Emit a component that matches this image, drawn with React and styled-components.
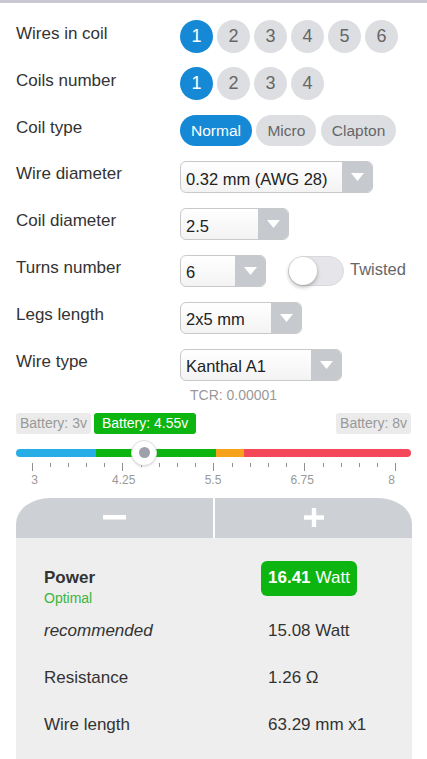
import React from 'react';
import styled, { createGlobalStyle } from 'styled-components';

const GlobalStyle = createGlobalStyle`
  html, body {
    margin: 0;
    padding: 0;
    background: #fff;
  }
  body {
    font-family: "Liberation Sans", Arial, sans-serif;
    color: #333;
  }
`;

const Page = styled.div`
  width: 427px;
  min-height: 759px;
  border-top: 3px solid #c7c8d0;
  box-sizing: border-box;
  overflow: hidden;
`;

const Form = styled.div`
  padding: 10.6px 15px 0 16px;
`;

const Row = styled.div`
  display: flex;
  align-items: center;
  height: 46.8px;
`;

const Label = styled.div`
  width: 164px;
  flex-shrink: 0;
  font-size: 17px;
  line-height: 20px;
  margin-bottom: 6px;
  color: #333;
`;

const Choices = styled.div`
  display: flex;
  gap: ${p => p.$gap}px;
`;

const Circle = styled.div`
  width: 33px;
  height: 33px;
  border-radius: 50%;
  display: flex;
  align-items: center;
  justify-content: center;
  font-size: 18px;
  background: ${p => (p.$active ? '#1589d6' : '#dddee2')};
  color: ${p => (p.$active ? '#fff' : '#666')};
`;

const Pill = styled.div`
  height: 31px;
  padding: 0 11px;
  border-radius: 16px;
  display: flex;
  align-items: center;
  font-size: 15.5px;
  background: ${p => (p.$active ? '#1589d6' : '#dddee2')};
  color: ${p => (p.$active ? '#fff' : '#666')};
`;

const SelectBox = styled.div`
  width: ${p => p.$w}px;
  height: 32px;
  box-sizing: border-box;
  display: flex;
  border: 1px solid #c9c9c9;
  border-radius: 6px;
  overflow: hidden;
  background: linear-gradient(#fff, #f3f3f3);
`;

const SelectValue = styled.div`
  flex: 1;
  display: flex;
  align-items: center;
  padding: 4px 0 0 5px;
  font-size: 16.5px;
  color: #222;
  white-space: nowrap;
`;

const SelectArrow = styled.div`
  width: 30px;
  background: #c6c9ce;
  display: flex;
  align-items: center;
  justify-content: center;
`;

const Toggle = styled.div`
  margin-left: 22px;
  width: 56px;
  height: 30px;
  box-sizing: border-box;
  border-radius: 15px;
  background: #e6e6ea;
  border: 1px solid #dadade;
  display: flex;
  align-items: center;
`;

const Knob = styled.div`
  width: 28px;
  height: 28px;
  border-radius: 50%;
  background: #fff;
  box-shadow: 0 2px 4px rgba(0, 0, 0, 0.3);
`;

const ToggleText = styled.div`
  margin-left: 6px;
  margin-bottom: 3px;
  font-size: 16.5px;
  color: #666;
`;

const Tcr = styled.div`
  padding-left: 174px;
  font-size: 14px;
  line-height: 14px;
  color: #999;
`;

const SliderSection = styled.div`
  padding: 0 16px 0 16px;
`;

const BatteryRow = styled.div`
  margin-top: 11px;
  display: flex;
  gap: 3px;
`;

const BatteryTag = styled.div`
  height: 21px;
  line-height: 21px;
  font-size: 14px;
  padding: 0 ${p => (p.$active ? 8 : 4)}px;
  border-radius: 3px;
  background: ${p => (p.$active ? '#0cb50f' : '#ebebeb')};
  color: ${p => (p.$active ? '#fff' : '#999')};
  margin-left: ${p => (p.$end ? 'auto' : '0')};
`;

const Track = styled.div`
  position: relative;
  margin-top: 10px;
  height: 18px;
  display: flex;
  align-items: center;
`;

const Bar = styled.div`
  display: flex;
  width: 100%;
  height: 8px;
  border-radius: 4px;
  overflow: hidden;
`;

const Segment = styled.div`
  flex: ${p => p.$size};
  background: ${p => p.$color};
`;

const Thumb = styled.div`
  position: absolute;
  top: 50%;
  width: 26px;
  height: 26px;
  margin: -13px 0 0 -13px;
  box-sizing: border-box;
  border-radius: 50%;
  background: #fff;
  border: 1px solid #dedede;
  box-shadow: 0 1px 2px rgba(0, 0, 0, 0.12);
  display: flex;
  align-items: center;
  justify-content: center;
`;

const ThumbDot = styled.div`
  width: 11px;
  height: 11px;
  border-radius: 50%;
  background: #9ea1a9;
`;

const Ticks = styled.div`
  margin-top: 1px;
  height: 8px;
  display: flex;
  justify-content: space-between;
  align-items: flex-start;
  padding: 0 14.5px 0 15.5px;
`;

const Tick = styled.div`
  width: 1px;
  height: ${p => (p.$major ? 8 : 4)}px;
  background: #8f8f8f;
`;

const TickLabels = styled.div`
  margin-top: 2px;
  height: 14px;
  display: flex;
  justify-content: space-between;
  padding: 0 19.5px 0 18.5px;
`;

const TickLabel = styled.div`
  width: 0;
  display: flex;
  justify-content: center;
  font-size: 12px;
  line-height: 14px;
  color: #999;
  white-space: nowrap;
`;

const Stepper = styled.div`
  margin: 11px 15px 0 16px;
  height: 40px;
  display: flex;
  gap: 2px;
`;

const StepButton = styled.div`
  flex: 1;
  background: #cdd0d5;
  display: flex;
  align-items: center;
  justify-content: center;
  border-top-left-radius: ${p => (p.$side === 'left' ? '34px 26px' : '0')};
  border-top-right-radius: ${p => (p.$side === 'right' ? '34px 26px' : '0')};
`;

const Panel = styled.div`
  margin: 0 15px 0 16px;
  padding: 23px 0 20px 28px;
  background: #eeeeee;
  min-height: 200px;
`;

const ResultRow = styled.div`
  display: grid;
  grid-template-columns: 217px 1fr;
  align-items: ${p => (p.$top ? 'start' : 'center')};
  height: ${p => (p.$top ? 46.5 : 47)}px;
  font-size: 17px;
  color: #333;
`;

const PowerLabel = styled.div`
  padding-top: 7px;
`;

const PowerTitle = styled.div`
  font-weight: bold;
  line-height: 20px;
`;

const Optimal = styled.div`
  font-size: 14px;
  line-height: 16px;
  margin-top: 2px;
  color: #3cb53c;
`;

const Badge = styled.div`
  justify-self: start;
  height: 35px;
  padding: 0 7px;
  border-radius: 6px;
  background: #0cb50f;
  color: #fff;
  display: flex;
  align-items: center;
  gap: 5px;
  b {
    font-weight: bold;
  }
`;

const Value = styled.div`
  padding-left: 7px;
`;

const Italic = styled.div`
  font-style: italic;
`;

const Arrow = () => (
  <svg width="13" height="8" viewBox="0 0 13 8">
    <polygon points="0,0 13,0 6.5,8" fill="#fff" />
  </svg>
);

const Select = ({ w, value }) => (
  <SelectBox $w={w}>
    <SelectValue>{value}</SelectValue>
    <SelectArrow>
      <Arrow />
    </SelectArrow>
  </SelectBox>
);

const MinusIcon = () => (
  <svg width="23" height="5" viewBox="0 0 23 5">
    <rect x="0" y="0" width="23" height="4.5" fill="#fff" />
  </svg>
);

const PlusIcon = () => (
  <svg width="20" height="19" viewBox="0 0 20 19">
    <rect x="0" y="7.3" width="20" height="4.4" fill="#fff" />
    <rect x="7.8" y="0" width="4.4" height="19" fill="#fff" />
  </svg>
);

const segments = [
  { size: 80, color: '#27aee6' },
  { size: 120, color: '#0cb50f' },
  { size: 28, color: '#f7a21b' },
  { size: 167, color: '#f5475a' },
];

const ticks = Array.from({ length: 21 }, (_, i) => i);
const tickLabels = ['3', '4.25', '5.5', '6.75', '8'];

export default function App() {
  const voltage = 4.55;
  const ratio = (voltage - 3) / 5;
  const thumbLeft = 15.5 + ratio * 364.5;

  return (
    <Page>
      <GlobalStyle />
      <Form>
        <Row>
          <Label>Wires in coil</Label>
          <Choices $gap={4}>
            {[1, 2, 3, 4, 5, 6].map(n => (
              <Circle key={n} $active={n === 1}>{n}</Circle>
            ))}
          </Choices>
        </Row>
        <Row>
          <Label>Coils number</Label>
          <Choices $gap={4}>
            {[1, 2, 3, 4].map(n => (
              <Circle key={n} $active={n === 1}>{n}</Circle>
            ))}
          </Choices>
        </Row>
        <Row>
          <Label>Coil type</Label>
          <Choices $gap={4.5}>
            {['Normal', 'Micro', 'Clapton'].map(t => (
              <Pill key={t} $active={t === 'Normal'}>{t}</Pill>
            ))}
          </Choices>
        </Row>
        <Row>
          <Label>Wire diameter</Label>
          <Select w={193} value="0.32 mm (AWG 28)" />
        </Row>
        <Row>
          <Label>Coil diameter</Label>
          <Select w={109} value="2.5" />
        </Row>
        <Row>
          <Label>Turns number</Label>
          <Select w={86} value="6" />
          <Toggle>
            <Knob />
          </Toggle>
          <ToggleText>Twisted</ToggleText>
        </Row>
        <Row>
          <Label>Legs length</Label>
          <Select w={122} value="2x5 mm" />
        </Row>
        <Row>
          <Label>Wire type</Label>
          <Select w={162} value="Kanthal A1" />
        </Row>
        <Tcr>TCR: 0.00001</Tcr>
      </Form>

      <SliderSection>
        <BatteryRow>
          <BatteryTag>Battery: 3v</BatteryTag>
          <BatteryTag $active>Battery: 4.55v</BatteryTag>
          <BatteryTag $end>Battery: 8v</BatteryTag>
        </BatteryRow>
        <Track>
          <Bar>
            {segments.map((s, i) => (
              <Segment key={i} $size={s.size} $color={s.color} />
            ))}
          </Bar>
          <Thumb style={{ left: thumbLeft }}>
            <ThumbDot />
          </Thumb>
        </Track>
        <Ticks>
          {ticks.map(i => (
            <Tick key={i} $major={i % 5 === 0} />
          ))}
        </Ticks>
        <TickLabels>
          {tickLabels.map(l => (
            <TickLabel key={l}>{l}</TickLabel>
          ))}
        </TickLabels>
      </SliderSection>

      <Stepper>
        <StepButton $side="left">
          <MinusIcon />
        </StepButton>
        <StepButton $side="right">
          <PlusIcon />
        </StepButton>
      </Stepper>

      <Panel>
        <ResultRow $top>
          <PowerLabel>
            <PowerTitle>Power</PowerTitle>
            <Optimal>Optimal</Optimal>
          </PowerLabel>
          <Badge>
            <b>16.41</b>
            <span>Watt</span>
          </Badge>
        </ResultRow>
        <ResultRow>
          <Italic>recommended</Italic>
          <Value>15.08 Watt</Value>
        </ResultRow>
        <ResultRow>
          <div>Resistance</div>
          <Value>1.26 Ω</Value>
        </ResultRow>
        <ResultRow>
          <div>Wire length</div>
          <Value>63.29 mm x1</Value>
        </ResultRow>
      </Panel>
    </Page>
  );
}
